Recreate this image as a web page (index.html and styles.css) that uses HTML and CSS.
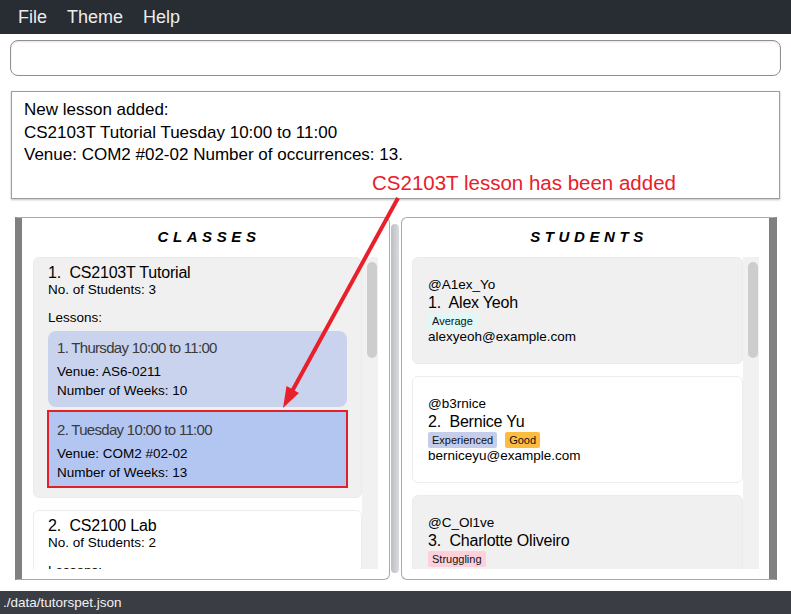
FILE: index.html
```html
<!DOCTYPE html>
<html lang="en">
<head>
<meta charset="utf-8">
<title>TutorsPet</title>
<link rel="stylesheet" href="styles.css">
</head>
<body>
<div class="menubar"><span>File</span><span>Theme</span><span>Help</span></div>
<div class="command"></div>
<div class="result">New lesson added:<br>CS2103T Tutorial Tuesday 10:00 to 11:00<br>Venue: COM2 #02-02 Number of occurrences: 13.</div>
<div class="split">
  <section class="panel panel-left">
    <h2 class="title">CLASSES</h2>
    <div class="list">
      <div class="cards">
        <div class="card alt class-card">
          <div class="name">1.&nbsp; CS2103T Tutorial</div>
          <div class="meta">No. of Students: 3</div>
          <div class="meta lessons-label">Lessons:</div>
          <div class="lessons">
            <div class="lesson">
              <div class="lesson-title">1. Thursday 10:00 to 11:00</div>
              <div class="meta lesson-line">Venue: AS6-0211</div>
              <div class="meta lesson-line">Number of Weeks: 10</div>
            </div>
            <div class="lesson lesson-new">
              <div class="lesson-title">2. Tuesday 10:00 to 11:00</div>
              <div class="meta lesson-line">Venue: COM2 #02-02</div>
              <div class="meta lesson-line">Number of Weeks: 13</div>
            </div>
          </div>
        </div>
        <div class="card class-card">
          <div class="name">2.&nbsp; CS2100 Lab</div>
          <div class="meta">No. of Students: 2</div>
          <div class="meta lessons-label">Lessons:</div>
        </div>
      </div>
      <div class="track"><div class="thumb"></div></div>
    </div>
  </section>
  <div class="divider"></div>
  <section class="panel panel-right">
    <h2 class="title">STUDENTS</h2>
    <div class="list">
      <div class="cards">
        <div class="card alt student-card">
          <div class="meta">@A1ex_Yo</div>
          <div class="name">1.&nbsp; Alex Yeoh</div>
          <div class="tags"><span class="tag tag-average">Average</span></div>
          <div class="meta">alexyeoh@example.com</div>
        </div>
        <div class="card student-card">
          <div class="meta">@b3rnice</div>
          <div class="name">2.&nbsp; Bernice Yu</div>
          <div class="tags"><span class="tag tag-experienced">Experienced</span><span class="tag tag-good">Good</span></div>
          <div class="meta">berniceyu@example.com</div>
        </div>
        <div class="card alt student-card">
          <div class="meta">@C_Ol1ve</div>
          <div class="name">3.&nbsp; Charlotte Oliveiro</div>
          <div class="tags"><span class="tag tag-struggling">Struggling</span></div>
        </div>
      </div>
      <div class="track"><div class="thumb"></div></div>
    </div>
  </section>
</div>
<div class="status">./data/tutorspet.json</div>
<div class="note">CS2103T lesson has been added</div>
<svg class="arrow" width="791" height="614" viewBox="0 0 791 614" aria-hidden="true">
  <line x1="398" y1="198" x2="290" y2="395" stroke="#e8202a" stroke-width="4" stroke-linecap="butt"/>
  <polygon points="283,408 299,393 286.5,386" fill="#e8202a"/>
</svg>
</body>
</html>
```
FILE: styles.css
```css
* { box-sizing: border-box; }
html, body { margin: 0; padding: 0; }
body {
  width: 791px;
  height: 614px;
  overflow: hidden;
  position: relative;
  display: flex;
  flex-direction: column;
  font-family: "Liberation Sans", Arial, sans-serif;
  color: #000;
  background: #fff;
}
.menubar {
  height: 34px;
  flex-shrink: 0;
  background: #282c33;
  color: #ececec;
  display: flex;
  align-items: center;
  gap: 20px;
  padding: 1px 0 0 18px;
  font-size: 18px;
}
.command {
  flex-shrink: 0;
  margin: 6px 10px 0;
  height: 36px;
  border: 1px solid #8f8f8f;
  border-radius: 8px;
  box-shadow: inset 0 1px 2px rgba(0,0,0,0.12);
}
.result {
  flex-shrink: 0;
  margin: 15px 11px 0;
  height: 108px;
  border: 1px solid #9c9c9c;
  box-shadow: 0 1px 2px rgba(0,0,0,0.25);
  padding: 7px 12px 5px;
  font-size: 17px;
  line-height: 22.5px;
}
.split {
  flex-shrink: 0;
  margin-top: 18px;
  height: 363px;
  display: flex;
  padding-left: 15px;
}
.panel {
  display: flex;
  flex-direction: column;
  border: 1px solid #a9a9a9;
  background: #fff;
}
.panel-left {
  width: 375px;
  border-left: 7px solid #808080;
  border-radius: 0 6px 6px 0;
}
.panel-right {
  width: 376px;
  border-right: 8px solid #808080;
  border-radius: 6px 0 0 6px;
}
.divider {
  width: 8px;
  margin: 7px 2px 7px 1px;
  border-radius: 4px;
  background: linear-gradient(to right, #bdbec2, #dadbde);
}
.title {
  margin: 0;
  height: 39px;
  line-height: 38px;
  text-align: center;
  font-size: 15px;
  font-weight: bold;
  font-style: italic;
  letter-spacing: 4.6px;
  padding-left: 7px;
}
.list {
  display: flex;
  height: 312px;
  overflow: hidden;
}
.panel-left .list { margin: 0 11px; }
.panel-right .list { margin: 0 10px; }
.cards {
  flex: 1;
  display: flex;
  flex-direction: column;
  gap: 12px;
  min-width: 0;
}
.track {
  width: 16px;
  flex-shrink: 0;
  background: #f1f1f1;
  padding: 5px 1px 0 5px;
}
.thumb {
  width: 10px;
  height: 96px;
  background: #cdcdcd;
  border-radius: 5px;
}
.card {
  flex-shrink: 0;
  border: 1px solid #ececec;
  border-radius: 6px;
  background: #fff;
}
.card.alt {
  background: #f0f0f0;
  border-color: #ebebeb;
}
.class-card { padding: 5px 14px 10px; }
.student-card { padding: 19px 15px 18px; }
.name {
  font-size: 16px;
  line-height: 19px;
  letter-spacing: -0.2px;
}
.meta {
  font-size: 13.5px;
  line-height: 16px;
}
.lessons-label { margin-top: 12px; }
.lessons {
  margin-top: 5px;
  display: flex;
  flex-direction: column;
  gap: 4px;
}
.lesson {
  background: #c9d3ee;
  border-radius: 8px;
  padding: 7px 9px;
}
.lesson-new {
  background: #b3c6f2;
  border-radius: 0;
  outline: 2px solid #e3202a;
  outline-offset: -1px;
  padding-top: 9px;
  padding-bottom: 5px;
}
.lesson-title {
  font-size: 15px;
  letter-spacing: -0.7px;
  line-height: 19px;
  color: #3a3a3a;
  margin-bottom: 5px;
}
.lesson-line { line-height: 19px; }
.tags {
  display: flex;
  gap: 8px;
  height: 17px;
  align-items: center;
}
.tag {
  font-size: 11px;
  line-height: 16px;
  padding: 0 4px;
  border-radius: 2px;
  color: #111;
}
.tag-average { background: #dff8f8; }
.tag-experienced { background: #c5cdeb; }
.tag-good { background: #fbbc3f; }
.tag-struggling { background: #fdd0da; }
.status {
  margin-top: auto;
  height: 23px;
  flex-shrink: 0;
  background: #3a3d44;
  color: #f2f2f2;
  font-size: 13.5px;
  line-height: 23px;
  padding-left: 3px;
}
.note {
  position: absolute;
  left: 372px;
  top: 171px;
  font-size: 20.5px;
  line-height: 24px;
  color: #e8202a;
}
.arrow {
  position: absolute;
  left: 0;
  top: 0;
  pointer-events: none;
}
```
